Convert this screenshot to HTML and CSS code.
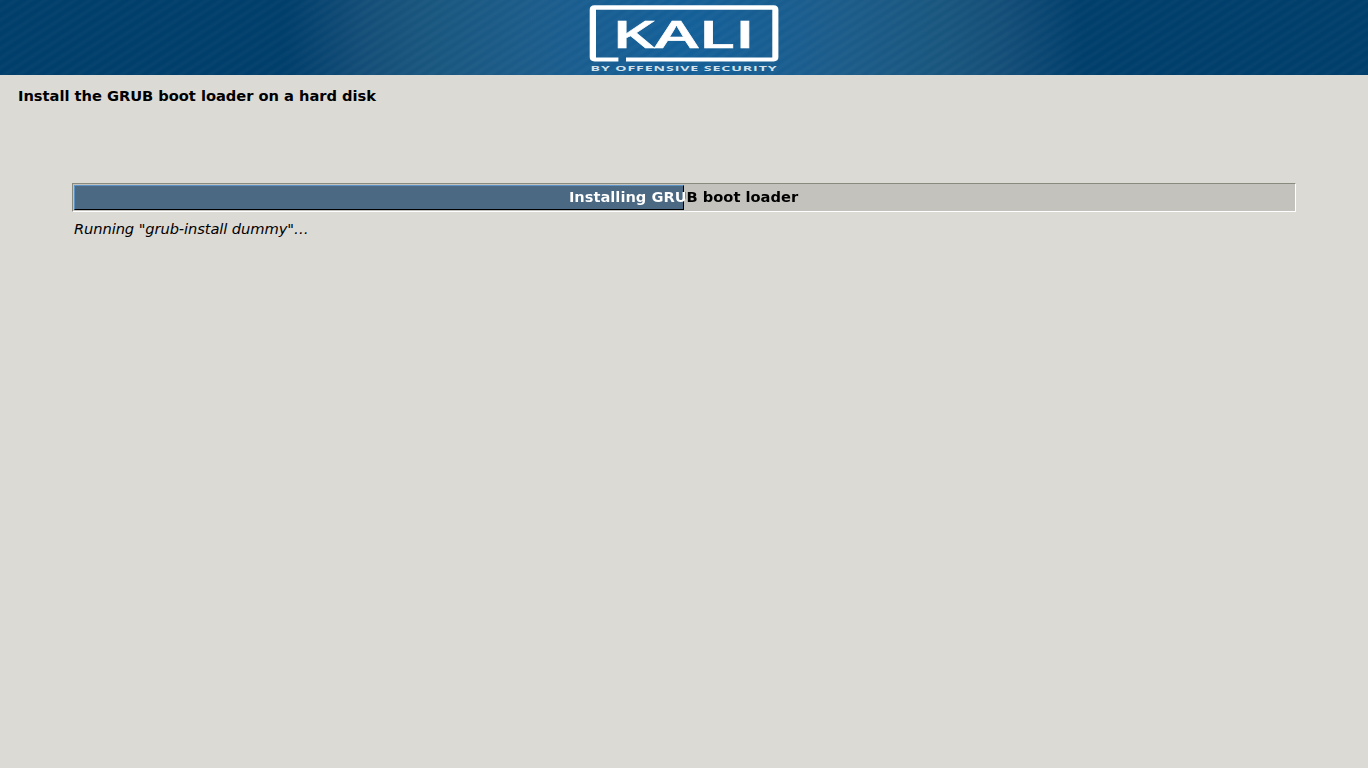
FILE: index.html
```html
<!DOCTYPE html>
<html lang="en">
<head>
<meta charset="utf-8">
<title>Kali Linux Installer</title>
<link rel="stylesheet" href="styles.css">
</head>
<body>
<header class="banner">
  <svg class="logo" width="210" height="75" viewBox="580 0 210 75">
    <path class="frame" fill-rule="evenodd" d="M618.4 61.4H594.5Q589.7 61.4 589.7 57V9.8Q589.7 5.3 594.5 5.3H773.6Q778.4 5.3 778.4 9.8V57Q778.4 61.4 773.6 61.4H626V57.4H772.3V9.8H596V57.4H618.4Z" />
    <text class="brand" x="612" y="47.6" textLength="143" lengthAdjust="spacingAndGlyphs">KALI</text>
    <text class="tagline" x="590.5" y="70.7" textLength="187" lengthAdjust="spacingAndGlyphs">BY OFFENSIVE SECURITY</text>
  </svg>
</header>
<main class="content">
  <h1 class="title">Install the GRUB boot loader on a hard disk</h1>
  <section class="progress">
    <div class="trough">
      <div class="bar"></div>
      <span class="label">Installing GRUB boot loader</span>
    </div>
    <p class="status">Running "grub-install dummy"…</p>
  </section>
</main>
</body>
</html>
```
FILE: styles.css
```css
body {
  margin: 0;
  min-height: 100vh;
  background: #dcdad5;
  color: #000;
  font: 14.667px/18px "DejaVu Sans", sans-serif;
}
.banner {
  height: 75px;
  display: flex;
  justify-content: center;
  background:
    repeating-linear-gradient(147deg, rgba(255,255,255,.025) 0 2px, rgba(255,255,255,0) 4px 6px, rgba(255,255,255,.025) 8px),
    radial-gradient(ellipse 400px 400px at 684px 37px, #13609a 0, #185e92 20%, #1c5c8a 40%, #19567e 65%, #144e78 80%, #0a4672 90%, #003e6b 100%);
}
.logo { display: block; margin-right: -2px; }
.frame { fill: #fff; }
.brand { fill: #fff; stroke: #fff; stroke-width: .5; font: 600 38px "Open Sans", sans-serif; }
.tagline { fill: #d4e2ec; font: 700 7.8px "Open Sans", sans-serif; letter-spacing: .5px; }
.content { padding: 12px 72px 0; }
.title {
  margin: 0 0 0 -54px;
  font-size: 14.667px;
  line-height: 18px;
  letter-spacing: -.02px;
}
.trough {
  position: relative;
  box-sizing: border-box;
  width: 1224px;
  height: 29px;
  margin-top: 78px;
  border: 1px solid;
  border-color: #888a7e #fff #fff #888a7e;
  background: #c4c2bd;
}
.bar {
  position: absolute;
  box-sizing: border-box;
  left: 1px;
  top: 1px;
  width: 610px;
  height: 25px;
  border: 1px solid;
  border-color: #5d92c4 #000 #000 #5d92c4;
  background: #4b6983;
}
/* The caption inverts where the filled part ends. */
.label {
  position: relative;
  display: block;
  box-sizing: border-box;
  padding-right: 1px;
  line-height: 25px;
  text-align: center;
  font-weight: bold;
  letter-spacing: -.01px;
  white-space: nowrap;
  color: transparent;
  background: linear-gradient(90deg, #fff 612px, #000 612px);
  -webkit-background-clip: text;
  background-clip: text;
}
.status { margin: 8px 0 0 2px; font-style: italic; letter-spacing: -.09px; }
```
